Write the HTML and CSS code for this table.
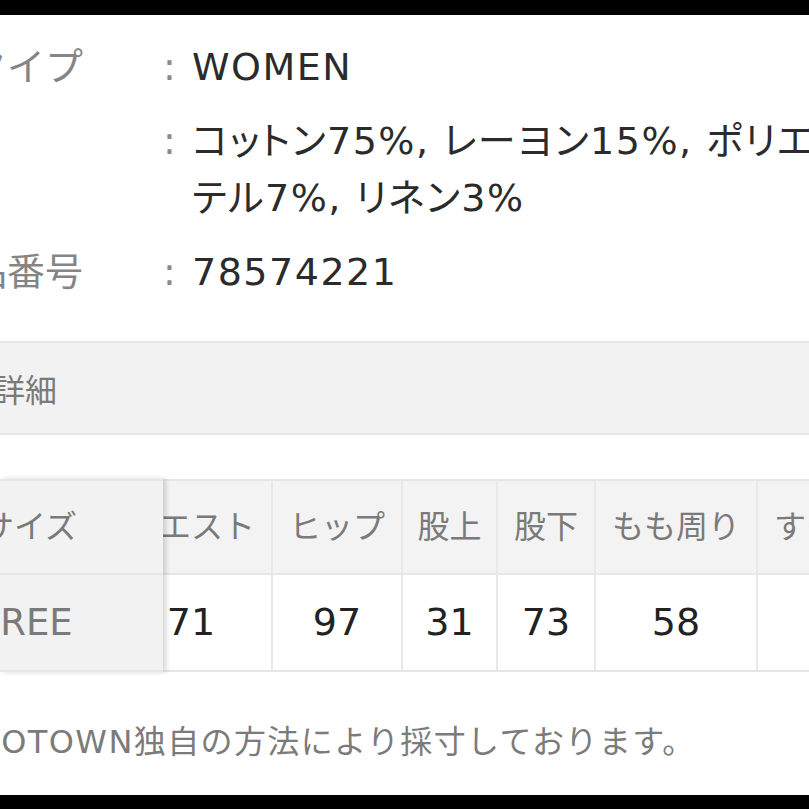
FILE: index.html
```html
<!DOCTYPE html>
<html lang="ja">
<head>
<meta charset="utf-8">
<title>商品詳細</title>
<link rel="stylesheet" href="styles.css">
</head>
<body>
<div class="screen">
  <dl class="spec">
    <div class="spec-row">
      <dt class="label">性別タイプ</dt>
      <dd class="colon">:</dd>
      <dd class="val">WOMEN</dd>
    </div>
    <div class="spec-row">
      <dt class="label">素材</dt>
      <dd class="colon">:</dd>
      <dd class="val">コットン75%, レーヨン15%, ポリエス<br>テル7%, リネン3%</dd>
    </div>
    <div class="spec-row">
      <dt class="label">取扱品番号</dt>
      <dd class="colon">:</dd>
      <dd class="val">78574221</dd>
    </div>
  </dl>

  <div class="panel">
    <span class="panel-title">サイズ詳細</span>
  </div>

  <div class="size-table">
    <div class="fixed-col">
      <div class="fc-head">サイズ</div>
      <div class="fc-body">FREE</div>
    </div>
    <div class="scroll">
      <table class="grid">
        <tr>
          <th class="w162">ウエスト</th>
          <th class="w130">ヒップ</th>
          <th class="w95">股上</th>
          <th class="w98">股下</th>
          <th class="w162">もも周り</th>
          <th class="w162">すそ周り</th>
        </tr>
        <tr>
          <td>71</td>
          <td>97</td>
          <td>31</td>
          <td>73</td>
          <td>58</td>
          <td>44</td>
        </tr>
      </table>
    </div>
  </div>

  <p class="note">ZOZOTOWN独自の方法により採寸しております。</p>
</div>
</body>
</html>
```
FILE: styles.css
```css
* {
  box-sizing: border-box;
  margin: 0;
  padding: 0;
}

html, body {
  background: #000;
}

body {
  width: 809px;
  height: 809px;
  overflow: hidden;
  font-family: "DejaVu Sans", "Noto Sans CJK JP", sans-serif;
}

.screen {
  margin-top: 15px;
  height: 780px;
  background: #fff;
  overflow: hidden;
}

/* spec list */
.spec {
  padding-top: 24px;
  margin-left: -107px;
  display: flex;
  flex-direction: column;
  gap: 17px;
  font-size: 38px;
  line-height: 57px;
}

.spec-row {
  display: grid;
  grid-template-columns: 270px 29px 760px;
}

.label {
  color: #858585;
  white-space: nowrap;
}

.colon {
  color: #8a8a8a;
}

.val {
  color: #2b2b2b;
  white-space: nowrap;
  font-feature-settings: "palt";
  letter-spacing: 1.5px;
}

/* section header */
.panel {
  margin-top: 40px;
  height: 94px;
  background: #f2f2f2;
  border-top: 2px solid #e6e6e6;
  border-bottom: 2px solid #e6e6e6;
  display: flex;
  align-items: center;
  font-size: 32px;
  color: #7a7a7a;
}

.panel-title {
  margin-left: -102px;
  white-space: nowrap;
}

/* size table */
.size-table {
  margin-top: 44px;
  display: flex;
}

.fixed-col {
  width: 163px;
  flex: none;
  background: #f2f2f2;
  border-top: 2px solid #e6e6e6;
  position: relative;
  z-index: 1;
  box-shadow: 3px 0 5px rgba(0, 0, 0, 0.16);
  color: #7a7a7a;
  white-space: nowrap;
}

.fc-head {
  height: 94px;
  font-size: 32px;
  line-height: 92px;
  border-bottom: 2px solid #e6e6e6;
  text-indent: -18px;
}

.fc-body {
  height: 97px;
  font-size: 37px;
  line-height: 95px;
  border-bottom: 2px solid #e6e6e6;
  text-indent: -21px;
}

.scroll {
  flex: 1;
  overflow: hidden;
}

.grid {
  margin-left: -52px;
  width: 809px;
  table-layout: fixed;
  border-collapse: separate;
  border-spacing: 0;
  border-top: 2px solid #e6e6e6;
}

.grid th,
.grid td {
  border-right: 2px solid #e8e8e8;
  border-bottom: 2px solid #e6e6e6;
  text-align: center;
  white-space: nowrap;
  overflow: hidden;
  padding: 0;
}

.grid th {
  background: #f3f3f3;
  font-weight: normal;
  font-size: 32px;
  line-height: 92px;
  color: #7a7a7a;
}

.grid td {
  background: #fff;
  font-size: 38px;
  line-height: 95px;
  color: #222;
}

.w162 { width: 162px; }
.w130 { width: 130px; }
.w95 { width: 95px; }
.w98 { width: 98px; }

/* footnote */
.note {
  margin-top: 46px;
  margin-left: -72px;
  font-size: 32px;
  line-height: 48px;
  letter-spacing: 1.4px;
  color: #7b7b7b;
  white-space: nowrap;
}
```
